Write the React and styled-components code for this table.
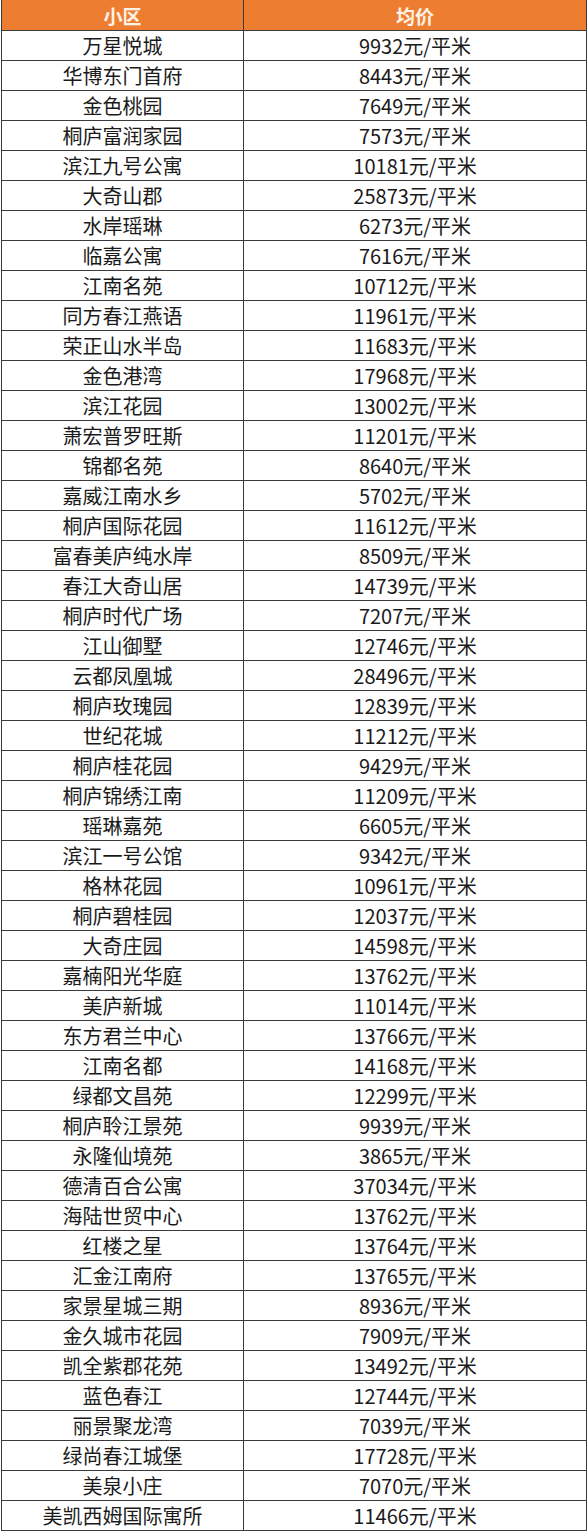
import React from "react";
import styled, { createGlobalStyle } from "styled-components";

const GlobalStyle = createGlobalStyle`
  html, body {
    margin: 0;
    padding: 0;
    background: #fff;
  }
  body {
    font-family: "Noto Sans CJK SC", "Noto Sans", "Liberation Sans", sans-serif;
  }
`;

const data = [
  ["万星悦城", 9932],
  ["华博东门首府", 8443],
  ["金色桃园", 7649],
  ["桐庐富润家园", 7573],
  ["滨江九号公寓", 10181],
  ["大奇山郡", 25873],
  ["水岸瑶琳", 6273],
  ["临嘉公寓", 7616],
  ["江南名苑", 10712],
  ["同方春江燕语", 11961],
  ["荣正山水半岛", 11683],
  ["金色港湾", 17968],
  ["滨江花园", 13002],
  ["萧宏普罗旺斯", 11201],
  ["锦都名苑", 8640],
  ["嘉威江南水乡", 5702],
  ["桐庐国际花园", 11612],
  ["富春美庐纯水岸", 8509],
  ["春江大奇山居", 14739],
  ["桐庐时代广场", 7207],
  ["江山御墅", 12746],
  ["云都凤凰城", 28496],
  ["桐庐玫瑰园", 12839],
  ["世纪花城", 11212],
  ["桐庐桂花园", 9429],
  ["桐庐锦绣江南", 11209],
  ["瑶琳嘉苑", 6605],
  ["滨江一号公馆", 9342],
  ["格林花园", 10961],
  ["桐庐碧桂园", 12037],
  ["大奇庄园", 14598],
  ["嘉楠阳光华庭", 13762],
  ["美庐新城", 11014],
  ["东方君兰中心", 13766],
  ["江南名都", 14168],
  ["绿都文昌苑", 12299],
  ["桐庐聆江景苑", 9939],
  ["永隆仙境苑", 3865],
  ["德清百合公寓", 37034],
  ["海陆世贸中心", 13762],
  ["红楼之星", 13764],
  ["汇金江南府", 13765],
  ["家景星城三期", 8936],
  ["金久城市花园", 7909],
  ["凯全紫郡花苑", 13492],
  ["蓝色春江", 12744],
  ["丽景聚龙湾", 7039],
  ["绿尚春江城堡", 17728],
  ["美泉小庄", 7070],
  ["美凯西姆国际寓所", 11466],
];

const Page = styled.div`
  width: 588px;
  padding-left: 1px;
  box-sizing: border-box;
`;

const Table = styled.div`
  width: 586px;
  display: flex;
  flex-direction: column;
  border-left: 1px solid #3a3a3a;
  border-right: 1px solid #3a3a3a;
  box-sizing: border-box;
`;

const Row = styled.div`
  display: grid;
  grid-template-columns: 242px 1fr;
  height: ${(p) => (p.$head ? 31 : 30)}px;
  box-sizing: border-box;
  border-bottom: 1px solid #3a3a3a;
  background: ${(p) => (p.$head ? "#ed7d31" : "#fff")};
`;

const Cell = styled.div`
  display: flex;
  align-items: center;
  justify-content: center;
  font-size: ${(p) => (p.$head ? "19px" : "20px")};
  font-weight: ${(p) => (p.$head ? 700 : 400)};
  color: ${(p) => (p.$head ? "#fdf3e6" : "#1a1a1a")};
  border-right: ${(p) => (p.$last ? "none" : "1px solid #3a3a3a")};
  line-height: 1;
  white-space: nowrap;
  padding-top: 1px;
`;

export default function App() {
  return (
    <>
      <GlobalStyle />
      <Page>
        <Table>
          <Row $head>
            <Cell $head>小区</Cell>
            <Cell $head $last>均价</Cell>
          </Row>
          {data.map(([name, price]) => (
            <Row key={name}>
              <Cell>{name}</Cell>
              <Cell $last>{price}元/平米</Cell>
            </Row>
          ))}
        </Table>
      </Page>
    </>
  );
}
